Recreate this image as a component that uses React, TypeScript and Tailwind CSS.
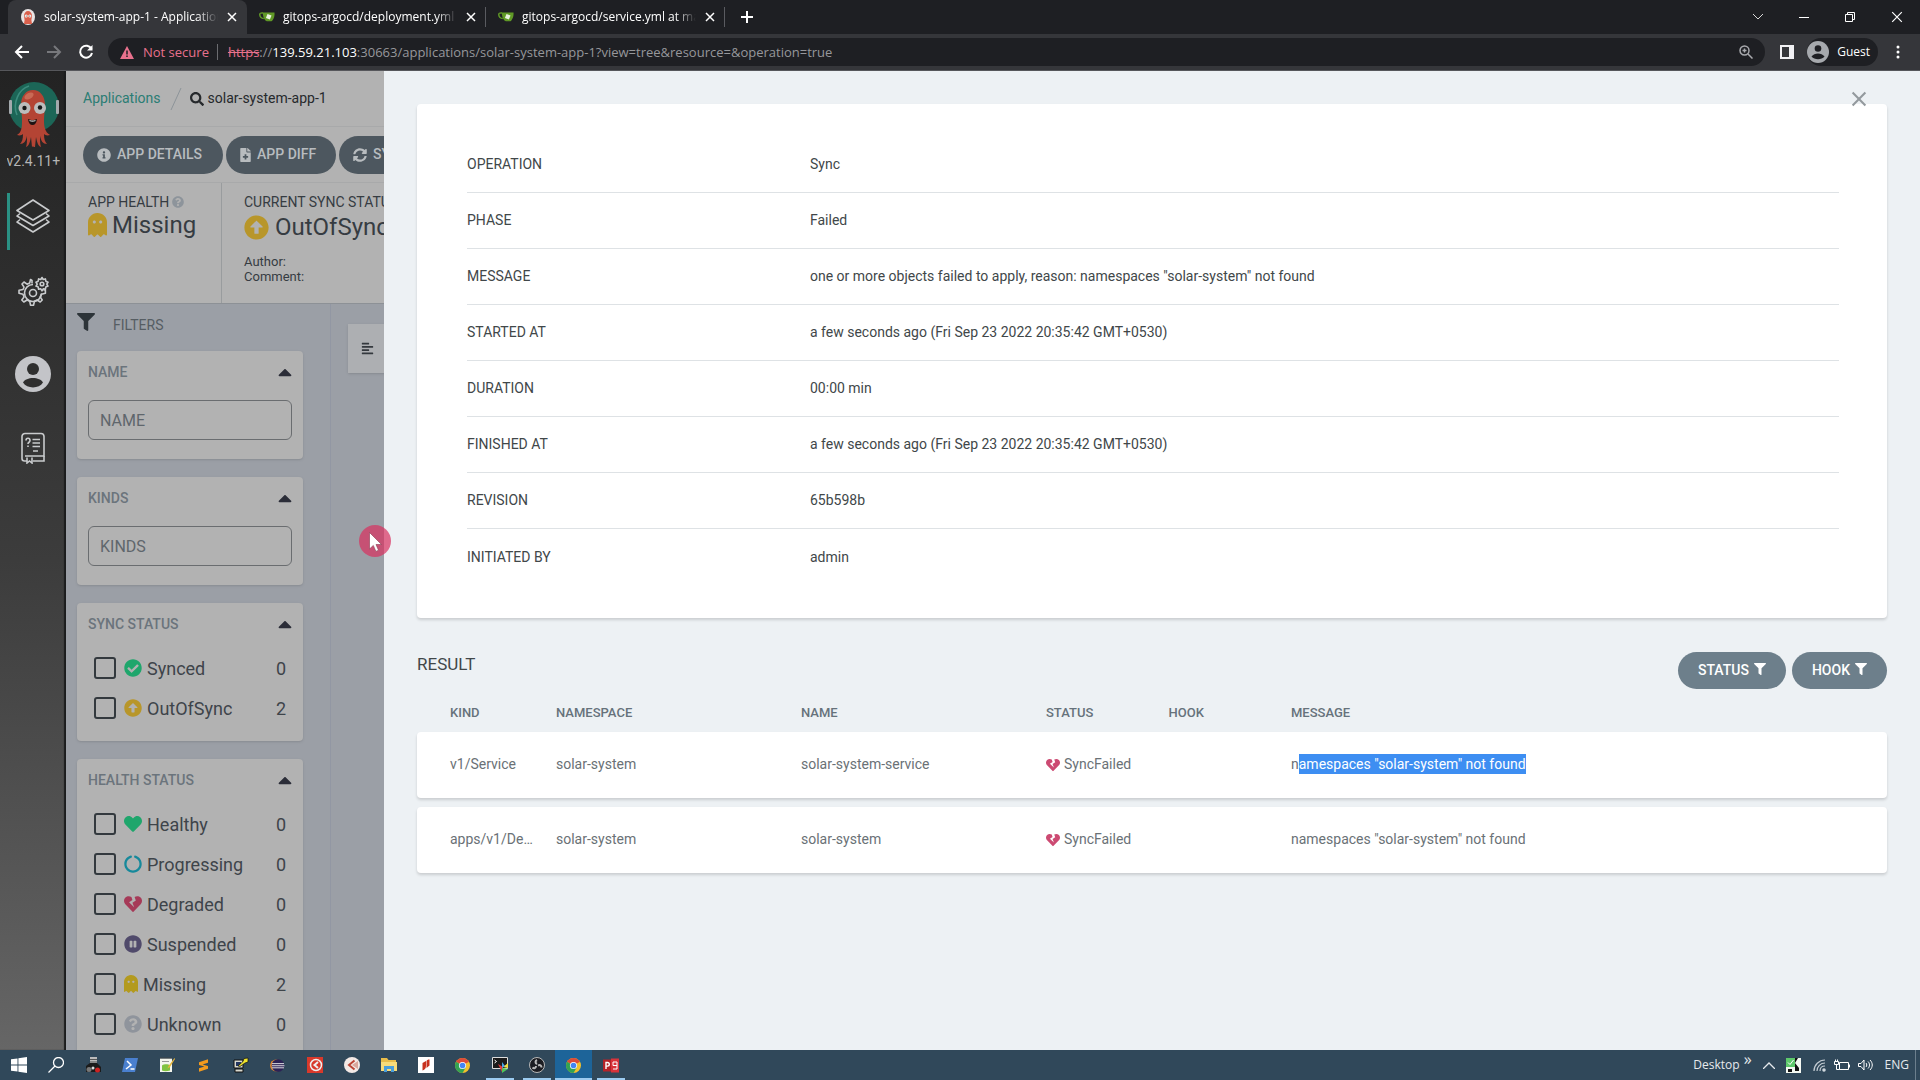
import { useState } from 'react';
import type { ReactNode } from 'react';
import {
  FaAlignLeft,
  FaArrowAltCircleUp,
  FaCaretUp,
  FaCheckCircle,
  FaCircleNotch,
  FaFileMedical,
  FaFilter,
  FaGhost,
  FaHeart,
  FaHeartBroken,
  FaInfoCircle,
  FaPauseCircle,
  FaQuestionCircle,
  FaSearch,
  FaSyncAlt,
} from 'react-icons/fa';

const browserTabs = [
  { title: 'solar-system-app-1 - Applications', icon: 'argo', active: true },
  { title: 'gitops-argocd/deployment.yml at main', icon: 'gitea', active: false },
  { title: 'gitops-argocd/service.yml at main', icon: 'gitea', active: false },
];

const operation = [
  { label: 'OPERATION', value: 'Sync' },
  { label: 'PHASE', value: 'Failed' },
  { label: 'MESSAGE', value: 'one or more objects failed to apply, reason: namespaces "solar-system" not found' },
  { label: 'STARTED AT', value: 'a few seconds ago (Fri Sep 23 2022 20:35:42 GMT+0530)' },
  { label: 'DURATION', value: '00:00 min' },
  { label: 'FINISHED AT', value: 'a few seconds ago (Fri Sep 23 2022 20:35:42 GMT+0530)' },
  { label: 'REVISION', value: '65b598b' },
  { label: 'INITIATED BY', value: 'admin' },
];

const results = [
  { kind: 'v1/Service', namespace: 'solar-system', name: 'solar-system-service', selected: true },
  { kind: 'apps/v1/Deployment', namespace: 'solar-system', name: 'solar-system', selected: false },
];

const syncStatuses = [
  { name: 'Synced', count: 0, icon: <FaCheckCircle className="text-[#1fa66c]" /> },
  { name: 'OutOfSync', count: 2, icon: <FaArrowAltCircleUp className="text-[#b8962a]" /> },
];

const healthStatuses = [
  { name: 'Healthy', count: 0, icon: <FaHeart className="text-[#1fa66c]" /> },
  { name: 'Progressing', count: 0, icon: <FaCircleNotch className="text-[#16899b]" /> },
  { name: 'Degraded', count: 0, icon: <FaHeartBroken className="text-[#a63a58]" /> },
  { name: 'Suspended', count: 0, icon: <FaPauseCircle className="text-[#504a6b]" /> },
  { name: 'Missing', count: 2, icon: <GhostIcon className="h-[18px] w-[14px] text-[#b39a1f]" /> },
  { name: 'Unknown', count: 0, icon: <FaQuestionCircle className="text-[#8f949c]" /> },
];

function GhostIcon({ className }: { className: string }) {
  return <FaGhost className={className} preserveAspectRatio="none" />;
}

function CloseIcon({ className }: { className: string }) {
  return (
    <svg viewBox="0 0 10 10" className={className} fill="none" stroke="currentColor">
      <path d="M1 1l8 8M9 1l-8 8" />
    </svg>
  );
}

function ArgoFavicon() {
  return (
    <svg viewBox="0 0 16 16" className="size-4 shrink-0">
      <ellipse cx="8" cy="8" rx="7" ry="8" fill="#e8e4e4" />
      <path d="M4 7a4 5 0 018 0l-.6 4 .6 4H4l.6-4z" fill="#d9604c" />
      <circle cx="6.2" cy="7" r="1.5" fill="#fff" />
      <circle cx="9.8" cy="7" r="1.5" fill="#fff" />
      <circle cx="6.2" cy="7" r=".6" fill="#333" />
      <circle cx="9.8" cy="7" r=".6" fill="#333" />
    </svg>
  );
}

function GiteaFavicon() {
  return (
    <svg viewBox="0 0 16 16" className="size-4 shrink-0">
      <path d="M4 4C1.5 3.6.6 4.4.8 6c.3 2.2 1.8 3.4 4 3.6" fill="none" stroke="#609926" strokeWidth="1.5" />
      <path d="M3.8 3.5h11.7c.3 3-.4 6-2.3 8.2-.5.5-1 .6-1.6.6H7.8c-2.2-.8-4-4.4-4-8.8z" fill="#609926" />
      <path d="M8.5 5l4 1.5-1.6 4-4-1.6z" fill="#e9f3df" />
    </svg>
  );
}

function ArgoLogo() {
  return (
    <svg viewBox="0 0 54 68" className="h-[68px] w-[54px]">
      <circle cx="28" cy="26" r="25" fill="#1c6657" />
      <path d="M11 34C6 22 13 8 23 5" fill="none" stroke="#3c8c7d" strokeWidth="1.6" />
      <rect x="3" y="19" width="3" height="14" rx="1" fill="#a3a9ad" />
      <rect x="50" y="19" width="3" height="14" rx="1" fill="#a3a9ad" />
      <path
        d="M15 24c0-9 5-15 12-15s12 6 12 15c0 6-1 9-1 15 0 7 1 12 6 15-3 1-5 0-6-1 0 5 1 8 3 10-4 0-6-3-7-8 0 5 0 8 1 11-3-1-4-5-5-10l-1 10c-2 0-2-1-3 0l-1-10c-1 5-2 9-5 10 1-3 1-6 1-11-1 5-3 8-7 8 2-2 3-5 3-10-1 1-3 2-6 1 5-3 5-8 5-15 0-6-1-9-1-15z"
        fill="#b44434"
      />
      <ellipse cx="23" cy="15" rx="5" ry="3" fill="#c96a55" transform="rotate(-30 23 15)" />
      <circle cx="18.5" cy="27" r="6" fill="#bcbcbc" />
      <circle cx="34" cy="27" r="6" fill="#bcbcbc" />
      <circle cx="18.5" cy="27" r="2.2" fill="#161616" />
      <circle cx="34" cy="26.5" r="2.2" fill="#161616" />
      <path d="M22 38c3 1.5 6 1.5 9 0-.5 4-2 6-4.5 6S22.500 42 22 38z" fill="#1c1313" />
      <path d="M23.5 39.5c2 .8 4 .8 6 0" stroke="#ccc" strokeWidth="1.2" fill="none" />
    </svg>
  );
}

function BrowserChrome() {
  return (
    <header className="shrink-0 bg-[#1e1f23] font-['Open_Sans','Noto_Sans',sans-serif] text-white">
      <div className="flex h-[34px] items-stretch justify-between pl-2">
        <div className="flex items-stretch">
          {browserTabs.map((tab) => (
            <div
              key={tab.title}
              className={`flex w-[239px] items-center rounded-t-lg pr-[10px] pl-3 ${tab.active ? 'bg-[#35363a]' : ''}`}
            >
              {tab.icon === 'argo' ? <ArgoFavicon /> : <GiteaFavicon />}
              <span className="ml-2 w-[174px] overflow-hidden text-xs leading-5 whitespace-nowrap [mask-image:linear-gradient(to_right,black_88%,transparent)]">
                {tab.title}
              </span>
              <button aria-label="Close tab" className="ml-auto">
                <CloseIcon className="size-[10px] stroke-[1.5]" />
              </button>
              {!tab.active && <span className="ml-[9px] -mr-[10px] h-5 w-px bg-[#5a5b60]" />}
            </div>
          ))}
          <button aria-label="New tab" className="ml-4">
            <svg viewBox="0 0 12 12" className="size-3" stroke="#fff" strokeWidth="2">
              <path d="M6 0v12M0 6h12" />
            </svg>
          </button>
        </div>
        <div className="flex items-center gap-9 pr-[17px]">
          <button aria-label="Search tabs">
            <svg viewBox="0 0 10 6" className="h-[6px] w-[10px]" fill="none" stroke="#d8d8d8">
              <path d="M0 0l5 5 5-5" />
            </svg>
          </button>
          <button aria-label="Minimize">
            <span className="block h-px w-[10px] bg-white" />
          </button>
          <button aria-label="Restore">
            <svg viewBox="0 0 10 10" className="size-[10px]" fill="none" stroke="#fff">
              <path d="M.5 2.5h7v7h-7zM2.5 2.5v-2h7v7h-2" />
            </svg>
          </button>
          <button aria-label="Close window">
            <CloseIcon className="size-3" />
          </button>
        </div>
      </div>

      <div className="flex h-[37px] items-center border-b border-[#56575b] bg-[#35363a] pr-5 pl-[14px]">
        <div className="flex items-center gap-4">
          <button aria-label="Back">
            <svg viewBox="0 0 16 16" className="size-4" fill="none" stroke="#fff" strokeWidth="2">
              <path d="M15 8H2M8 2L2 8l6 6" />
            </svg>
          </button>
          <button aria-label="Forward">
            <svg viewBox="0 0 16 16" className="size-4" fill="none" stroke="#77787c" strokeWidth="2">
              <path d="M1 8h13M8 2l6 6-6 6" />
            </svg>
          </button>
          <button aria-label="Reload">
            <svg viewBox="0 0 16 16" className="size-4" fill="none" stroke="#fff" strokeWidth="2">
              <path d="M13.5 5A6 6 0 1014 9" />
              <path d="M14.5 1v5.5H9z" fill="#fff" stroke="none" />
            </svg>
          </button>
        </div>
        <div className="ml-[14px] flex h-7 flex-1 items-center rounded-full bg-[#1e1f23] px-3 text-[13px] leading-5">
          <svg viewBox="0 0 14 13" className="h-[13px] w-[14px]">
            <path d="M7 0l7 13H0z" fill="#e8718d" />
            <path d="M7 4.500v4M7 9.500v1.500" stroke="#1e1f23" strokeWidth="1.5" />
          </svg>
          <span className="ml-[9px] text-[#e8718d]">Not secure</span>
          <span className="mr-[10px] ml-2 h-4 w-px bg-[#6b6c70]" />
          <span className="flex-1 whitespace-nowrap text-[#96979b]">
            <span className="text-[#e8718d] line-through">https</span>://
            <span className="text-white">139.59.21.103</span>
            :30663/applications/solar-system-app-1?view=tree&amp;resource=&amp;operation=true
          </span>
          <svg viewBox="0 0 14 14" className="size-[14px]" fill="none" stroke="#a9aaae" strokeWidth="1.5">
            <circle cx="5.500" cy="5.500" r="4.500" />
            <path d="M9 9l4.500 4.500M5.500 3.500v4M3.500 5.500h4" />
          </svg>
        </div>
        <button aria-label="Side panel" className="ml-[15px]">
          <svg viewBox="0 0 14 14" className="size-[14px]">
            <path d="M0 0h14v14H0z" fill="#f1f1f4" />
            <path d="M2 2h7v10H2z" fill="#35363a" />
          </svg>
        </button>
        <button className="ml-[13px] flex h-7 items-center gap-2 rounded-full bg-[#1e1f23] pr-2 text-xs">
          <svg viewBox="0 0 22 22" className="size-[22px]">
            <circle cx="11" cy="11" r="11" fill="#a6a9ad" />
            <circle cx="11" cy="7.500" r="3.300" fill="#1e1f23" />
            <path d="M4.500 15.500c3-4 10-4 13 0-3 3.500-10 3.500-13 0z" fill="#1e1f23" />
          </svg>
          Guest
        </button>
        <button aria-label="Menu" className="ml-[18px]">
          <svg viewBox="0 0 4 14" className="h-[14px] w-1" fill="#fff">
            <circle cx="2" cy="2" r="1.5" />
            <circle cx="2" cy="7" r="1.5" />
            <circle cx="2" cy="12" r="1.5" />
          </svg>
        </button>
      </div>
    </header>
  );
}

function Sidebar() {
  return (
    <nav className="flex w-[66px] shrink-0 flex-col items-center bg-linear-to-b from-[#232323] via-[#3c3c3c] to-[#666] pt-[10px] text-[#c9cbcd] shadow-[inset_-2px_0_1px_#1b1c1d]">
      <ArgoLogo />
      <div className="mb-5 w-[53px] overflow-hidden text-[14px] leading-6 whitespace-nowrap text-[#b5b5b5]">v2.4.11+b7d7f5a</div>
      <div className="flex h-[57px] w-full items-center pl-[7px]">
        <span className="h-[57px] w-[3px] bg-[#2a9184]" />
        <a href="#applications" aria-label="Applications" className="-mt-3 ml-[6px]">
          <svg viewBox="0 0 34 34" className="size-[34px]" fill="none" stroke="currentColor" strokeWidth="1.6" strokeLinejoin="round">
            <path d="M17 1L1 11.500 17 21l16-9.500z" />
            <path d="M4 14.500L1 17l16 9.500L33 17l-3-2.500" />
            <path d="M4 20.500L1 23l16 10 16-10-3-2.500" />
          </svg>
        </a>
      </div>
      <a href="#settings" aria-label="Settings" className="mt-[26px]">
        <svg viewBox="0 0 32 32" className="size-8" fill="none" stroke="currentColor" strokeWidth="1.6" strokeLinejoin="round">
          <circle cx="16" cy="17" r="3.500" />
          <path d="M15 7.500v-3l-1.500-1-.8 3.500-2.700 1.200-3-2.200-2 2 2 3.200L6 13.500l-4 .8v3l4 1 1 2.700-2.200 3 2 2 3.200-2 2.700 1.200.8 4h3l1-4 2.500-1.200 3.200 2 2-2-2-3.200 1.200-2.500 4-1v-3l-2-.5" />
          <path d="M16 8.500a8.500 8.500 0 108.500 9" />
          <circle cx="25" cy="8" r="1.800" />
          <path d="M25 1.500l1.200 2 2.200-.6.400 2.300 2.200 1-1.200 1.900 1.200 2-2.200.9-.4 2.300-2.200-.5-1.200 2-1.200-2-2.200.5-.4-2.300-2.200-.9 1.200-2-1.200-1.900 2.200-1 .4-2.300 2.200.6z" />
        </svg>
      </a>
      <a href="#user" aria-label="User" className="mt-12">
        <svg viewBox="0 0 36 36" className="size-9">
          <circle cx="18" cy="18" r="18" fill="#c3c4c8" />
          <circle cx="18" cy="13" r="6" fill="#2f2f2f" />
          <path d="M8 26.500c3-6 17-6 20 0-4 6.500-16 6.500-20 0z" fill="#2f2f2f" />
        </svg>
      </a>
      <a href="#docs" aria-label="Documentation" className="mt-10">
        <svg viewBox="0 0 24 32" className="h-8 w-6" fill="none" stroke="currentColor" strokeWidth="1.6">
          <path d="M6 29H3.500A2.500 2.500 0 011 26.500v-22A3 3 0 014 1.500h16a3 3 0 013 3V24H4" />
          <path d="M23 24v5H12M6 25.500V31l2.500-2 2.500 2v-5.500" />
          <path d="M11.500 7.500H19M11.500 11H19M11.500 14.500H19M12 19h5" />
          <path d="M5 8.500c0-3 4-3 4 0 0 2-2 1.500-2 3.500M7 13.500v1.500" />
        </svg>
      </a>
    </nav>
  );
}

function FilterCard({ title, children }: { title: string; children: ReactNode }) {
  return (
    <section className="rounded-[4px] bg-[#b2b2b2] px-[11px] pb-[13px] shadow-sm">
      <button className="flex h-[42px] w-full items-center justify-between text-[14px] font-medium text-[#6b747c]">
        {title}
        <FaCaretUp className="-mr-1 size-[22px] text-[#2b2d38]" />
      </button>
      {children}
    </section>
  );
}

function TextFilter({ title }: { title: string }) {
  return (
    <FilterCard title={title}>
      <input
        aria-label={title}
        placeholder={title}
        className="mt-[7px] mb-[6px] block h-10 w-full rounded-[6px] border border-[#6a6d70] bg-transparent px-[11px] text-base placeholder:text-[#5f666c]"
      />
    </FilterCard>
  );
}

function CheckFilter({ title, items }: { title: string; items: { name: string; count: number; icon: ReactNode }[] }) {
  return (
    <FilterCard title={title}>
      <div className="pt-[3px]">
        {items.map((item) => (
          <label key={item.name} className="flex h-10 items-center px-[6px] text-[18px] text-[#3e444a]">
            <input type="checkbox" className="size-[22px] appearance-none rounded-[3px] border-2 border-[#33393e]" />
            <span className="ml-2 [&>svg]:block">{item.icon}</span>
            <span className="ml-[5px] flex-1">{item.name}</span>
            <span>{item.count}</span>
          </label>
        ))}
      </div>
    </FilterCard>
  );
}

function AppPage() {
  return (
    <div className="flex w-[318px] shrink-0 flex-col overflow-hidden bg-[#9b9fa6] whitespace-nowrap">
      <div className="flex h-[56px] shrink-0 items-center border-b border-[#a8a9aa] bg-[#b2b2b2] px-[17px] text-[14px]">
        <a href="#applications" className="text-[#2b7d74]">Applications</a>
        <svg viewBox="0 0 12 24" className="mr-2 ml-[9px] h-6 w-3" stroke="#8d9499">
          <path d="M11 1L1 23" />
        </svg>
        <FaSearch className="size-[14px] text-[#26292c]" />
        <span className="ml-1 text-[#26292c]">solar-system-app-1</span>
      </div>
      <div className="flex h-[56px] shrink-0 items-center gap-[3px] border-b border-[#a8a9aa] bg-[#b2b2b2] pl-[17px] text-[14px] font-medium text-[#b8bcbf]">
        <button className="flex h-[38px] w-[140px] shrink-0 items-center gap-[6px] rounded-full bg-[#4d575f] pl-[14px]">
          <FaInfoCircle className="size-[14px]" /> APP DETAILS
        </button>
        <button className="flex h-[38px] w-[110px] shrink-0 items-center gap-[6px] rounded-full bg-[#4d575f] pl-[14px]">
          <FaFileMedical className="h-[14px] w-[11px]" /> APP DIFF
        </button>
        <button className="flex h-[38px] shrink-0 items-center gap-[6px] rounded-full bg-[#4d575f] px-[14px]">
          <FaSyncAlt className="size-[14px]" /> SYNC
        </button>
      </div>
      <div className="flex h-[121px] shrink-0 items-stretch border-b border-[#8d9196] bg-[#b2b2b2] text-[#363c42]">
        <div className="w-[156px] shrink-0 border-r border-[#999c9e] pt-[9px] pl-[22px]">
          <div className="flex items-center gap-[3px] text-[14px] leading-5">
            APP HEALTH <FaQuestionCircle className="size-3 text-[#8d949b]" />
          </div>
          <div className="flex items-center gap-[5px] text-[24px] leading-[26px]">
            <GhostIcon className="h-[24px] w-[19px] text-[#b8962a]" /> Missing
          </div>
        </div>
        <div className="shrink-0 pt-[9px] pl-[22px]">
          <div className="text-[14px] leading-5">CURRENT SYNC STATUS</div>
          <div className="flex items-center gap-[6px] text-[24px] leading-[31px]">
            <FaArrowAltCircleUp className="size-[25px] text-[#b8962a]" /> OutOfSync
          </div>
          <div className="mt-[11px] text-[13px] leading-[15px]">
            <div>Author:</div>
            <div>Comment:</div>
          </div>
        </div>
      </div>
      <div className="flex min-h-0 flex-1">
        <aside className="flex w-[265px] shrink-0 flex-col gap-[18px] border-r border-[#9297a3] pr-[27px] pl-[11px]">
          <div className="-mb-[18px] flex h-[47px] shrink-0 items-start pt-[9px] text-[14px] text-[#565d63]">
            <FaFilter className="size-[18px] text-[#2d3439]" />
            <span className="ml-[18px] leading-6">FILTERS</span>
          </div>
          <TextFilter title="NAME" />
          <TextFilter title="KINDS" />
          <CheckFilter title="SYNC STATUS" items={syncStatuses} />
          <CheckFilter title="HEALTH STATUS" items={healthStatuses} />
        </aside>
        <div className="flex-1 pt-5 pl-[17px]">
          <button aria-label="Align" className="flex h-[49px] w-[60px] items-center bg-[#adafb2] pl-[13px] shadow">
            <FaAlignLeft className="size-[13px] text-[#34393e]" />
          </button>
        </div>
      </div>
    </div>
  );
}

function ResultTable() {
  return (
    <table className="w-full table-fixed border-separate border-spacing-x-0 border-spacing-y-[9px] text-left text-[14px] text-[#6a7176]">
      <thead>
        <tr className="text-[13px] text-[#66727b]">
          <th className="w-[139px] pl-[33px] font-medium">KIND</th>
          <th className="w-1/6 font-medium">NAMESPACE</th>
          <th className="w-1/6 font-medium">NAME</th>
          <th className="w-1/12 font-medium">STATUS</th>
          <th className="w-1/12 font-medium">HOOK</th>
          <th className="font-medium">MESSAGE</th>
        </tr>
      </thead>
      <tbody>
        {results.map((row) => (
          <tr key={row.kind} className="h-[66px] rounded-[4px] bg-white shadow-[0_2px_3px_rgba(0,0,0,0.15)]">
            <td className="truncate rounded-l-[4px] pr-5 pl-[33px]">{row.kind}</td>
            <td>{row.namespace}</td>
            <td>{row.name}</td>
            <td>
              <span className="flex items-center gap-1">
                <FaHeartBroken className="size-[14px] text-[#cc4a72]" /> SyncFailed
              </span>
            </td>
            <td />
            <td className="rounded-r-[4px]">
              {row.selected ? (
                <>
                  n<span className="bg-[#3d8ef2] py-[2px] text-white">amespaces "solar-system" not found</span>
                </>
              ) : (
                'namespaces "solar-system" not found'
              )}
            </td>
          </tr>
        ))}
      </tbody>
    </table>
  );
}

function OperationPanel({ onClose }: { onClose: () => void }) {
  return (
    <main className="relative min-w-0 flex-1 bg-[#edf1f4] px-[33px] pt-[33px] text-[#414749]">
      <button aria-label="Close" onClick={onClose} className="absolute top-5 right-[53px] text-[#93999d]">
        <CloseIcon className="size-4 stroke-[1.3]" />
      </button>
      <dl className="rounded-[4px] bg-white py-[33px] pr-12 pl-[50px] text-[14px] shadow-[0_2px_3px_rgba(0,0,0,0.15)]">
        {operation.map((item) => (
          <div key={item.label} className="flex h-14 items-center border-b border-[#dee2e5] last:border-0">
            <dt className="w-1/4">{item.label}</dt>
            <dd>{item.value}</dd>
          </div>
        ))}
      </dl>
      <div className="mt-[34px] mb-[5px] flex items-start justify-between">
        <h2 className="text-[17px] leading-6">RESULT</h2>
        <div className="flex gap-[6px] text-[14px] font-medium text-white">
          <button className="flex h-[37px] items-center gap-[5px] rounded-full bg-[#6d7f8b] px-5">
            STATUS <FaFilter className="mb-1 size-3" />
          </button>
          <button className="flex h-[37px] items-center gap-[5px] rounded-full bg-[#6d7f8b] px-5">
            HOOK <FaFilter className="mb-1 size-3" />
          </button>
        </div>
      </div>
      <ResultTable />
      {/* pointer with the click highlight */}
      <svg viewBox="0 0 32 32" className="absolute top-[454px] -left-[25px] size-8">
        <circle cx="16" cy="16" r="16" fill="#d9315f" fillOpacity=".7" />
        <path d="M10.500 7.500v16.500l3.800-3.600 2.600 6 2.600-1.200-2.500-5.700h5.500z" fill="#fff" stroke="#8c3a52" strokeWidth=".6" />
      </svg>
    </main>
  );
}

function ChromeIcon() {
  return (
    <svg viewBox="0 0 16 16" className="size-[15px]">
      <circle cx="8" cy="8" r="8" fill="#f2c02c" />
      <path d="M8 8L1.100 4A8 8 0 0114.900 4z" fill="#dd4b39" />
      <path d="M8 8L1.100 4A8 8 0 008 16l3.500-6z" fill="#33a353" />
      <circle cx="8" cy="8" r="3.800" fill="#fff" />
      <circle cx="8" cy="8" r="3" fill="#4285f4" />
    </svg>
  );
}

const taskbarItems: { name: string; state?: 'open' | 'active'; icon: ReactNode }[] = [
  {
    name: 'Start',
    icon: (
      <svg viewBox="0 0 16 16" className="size-4" fill="#fff">
        <path d="M0 2.300L6.500 1.400v6.100H0zM7.400 1.300L16 0v7.500H7.400zM0 8.400h6.500v6.200L0 13.700zM7.400 8.400H16V16l-8.600-1.200z" />
      </svg>
    ),
  },
  {
    name: 'Search',
    icon: (
      <svg viewBox="0 0 16 16" className="size-4" fill="none" stroke="#fff" strokeWidth="1.3">
        <circle cx="10.500" cy="5.500" r="5" />
        <path d="M7 9l-6.500 6.500" />
      </svg>
    ),
  },
  {
    name: 'Database',
    icon: (
      <svg viewBox="0 0 16 16" className="size-4">
        <path d="M5 0h7v7H5z" fill="#bbb" />
        <path d="M5 2.500h7M5 5h7" stroke="#555" />
        <path d="M1 9l4-3h7l4 4v5H1z" fill="#1b1b1b" />
        <circle cx="4" cy="12.500" r="2.500" fill="#777" />
        <circle cx="12.500" cy="13" r="2.500" fill="#c22" />
        <circle cx="8" cy="11" r="1.5" fill="#ddd" />
      </svg>
    ),
  },
  {
    name: 'PowerShell',
    icon: (
      <svg viewBox="0 0 16 14" className="h-[14px] w-4">
        <path d="M3 0h13l-3 14H0z" fill="#4a80cf" />
        <path d="M5 3l4 4-5 4M8.500 11h4" stroke="#fff" strokeWidth="1.5" fill="none" />
      </svg>
    ),
  },
  {
    name: 'Notepad++',
    icon: (
      <svg viewBox="0 0 16 16" className="size-4">
        <path d="M1 1.500h12V15H1z" fill="#f4f6ee" />
        <path d="M3 8.500c3-2 7-1 8 0v5c-3 1-6 1-8 0z" fill="#80c342" />
        <path d="M1.500 1h11" stroke="#444" strokeWidth="1.5" strokeDasharray="1 1" />
        <path d="M3 4.500h7" stroke="#999" />
        <path d="M15.500 1l-6 8-1 2.500 2.500-1.500 5-8z" fill="#e5b53b" />
      </svg>
    ),
  },
  {
    name: 'Sublime Text',
    icon: (
      <svg viewBox="0 0 10 14" className="h-[13px] w-[9px]" fill="#f39a1d">
        <path d="M0 3.500L10 0v4L4 6l6 1.500v3L0 14v-4l6-2-6-1.500z" />
      </svg>
    ),
  },
  {
    name: 'PuTTY',
    icon: (
      <svg viewBox="0 0 16 16" className="size-4">
        <path d="M1 3h9v8H1zM2 12h8v3H2z" fill="#d9d9cf" stroke="#111" />
        <path d="M3 5h5v4H3z" fill="#23355f" />
        <path d="M15 1l-4 .5-1 3L5 9l2 .5L12 6l3-1z" fill="#f0e52d" stroke="#111" strokeWidth=".7" />
      </svg>
    ),
  },
  {
    name: 'Eclipse',
    icon: (
      <svg viewBox="0 0 16 14" className="h-[13px] w-[15px]">
        <circle cx="6.500" cy="7" r="6.500" fill="#e08733" />
        <circle cx="8.500" cy="7" r="6.800" fill="#2c2255" />
        <path d="M2 5h13M2 7.300h13.500M2 9.500h13" stroke="#eee" />
      </svg>
    ),
  },
  {
    name: 'Camtasia Recorder',
    icon: (
      <svg viewBox="0 0 16 16" className="size-4">
        <path d="M0 0h16v16H0z" fill="#d8392b" />
        <circle cx="9" cy="8" r="5.500" fill="none" stroke="#eee" strokeWidth="1.5" />
        <path d="M11 5L7.500 8l3.500 3" fill="none" stroke="#eee" strokeWidth="2" />
      </svg>
    ),
  },
  {
    name: 'Camtasia',
    icon: (
      <svg viewBox="0 0 16 16" className="size-4">
        <circle cx="8" cy="8" r="8" fill="#f3e9e6" />
        <path d="M10.500 3.500L5 8l5.500 4.500" fill="none" stroke="#bb4435" strokeWidth="2" />
        <path d="M8 8l6-4v8z" fill="#d9a79d" />
      </svg>
    ),
  },
  {
    name: 'File Explorer',
    icon: (
      <svg viewBox="0 0 16 14" className="h-[14px] w-4">
        <path d="M0 0h6l1.500 2H15v11H0z" fill="#e9bd4a" />
        <path d="M0 4h16v9H0z" fill="#f8dc7a" />
        <path d="M3 8h10v6h-3v-3H6v3H3z" fill="#4a9fdb" />
      </svg>
    ),
  },
  {
    name: 'Nitro',
    icon: (
      <svg viewBox="0 0 16 16" className="size-4">
        <path d="M0 0h16v16H0z" fill="#fff" />
        <path d="M4.500 6l3.500-2v5c0 2-1 3.500-3.500 4.500zM8.500 4.500C8.500 3 10 2.500 11.500 2.500v6L8.500 11z" fill="#c8321f" />
      </svg>
    ),
  },
  { name: 'Google Chrome', icon: <ChromeIcon /> },
  {
    name: 'MobaXterm',
    state: 'open',
    icon: (
      <svg viewBox="0 0 16 16" className="size-4">
        <path d="M.5.500h15v11H.5z" fill="#1b1b1b" stroke="#ddd" />
        <path d="M2.500 3l2 1.500-2 1.500" stroke="#fff" fill="none" />
        <path d="M6 7l5 3-1 5z" fill="#e23b3b" />
        <path d="M11 10l5-4v5z" fill="#f1dd3f" />
        <path d="M10 11l6 1-6 4z" fill="#4fc35a" />
        <path d="M10 5l3 4-3 2z" fill="#4aa3e8" />
      </svg>
    ),
  },
  {
    name: 'OBS Studio',
    state: 'open',
    icon: (
      <svg viewBox="0 0 16 16" className="size-4">
        <circle cx="8" cy="8" r="7.500" fill="#1c1d22" stroke="#b9b9b9" />
        <path d="M8 7c-2-1-2-3 0-4M9 8.500c2-1 3.500 0 3.500 2M7 9c0 2-2 3-3.500 1.500" stroke="#b9b9b9" strokeWidth="2" fill="none" />
      </svg>
    ),
  },
  { name: 'Chrome window', state: 'active', icon: <ChromeIcon /> },
  {
    name: 'PowerPoint',
    state: 'open',
    icon: (
      <svg viewBox="0 0 16 15" className="h-[15px] w-4">
        <path d="M0 1.500h9v12H0z" fill="#b52228" />
        <path d="M8 .500h8v14H8z" fill="#d8333a" />
        <path d="M3 11V4.500h1.500a1.800 1.800 0 010 3.600H3" stroke="#fff" strokeWidth="1.4" fill="none" />
        <path d="M10 4h4v7h-4M10 7.500h4M10 4v3.500" stroke="#fff" fill="none" />
      </svg>
    ),
  },
];

function Taskbar() {
  return (
    <footer className="flex h-[30px] shrink-0 items-stretch justify-between bg-[#30485a] font-['Open_Sans','Noto_Sans',sans-serif] text-xs text-[#e6eaed]">
      <div className="flex">
        {taskbarItems.map((item) => (
          <button
            key={item.name}
            aria-label={item.name}
            className={`flex w-[37px] flex-col items-center ${item.state === 'active' ? 'bg-[#1d6499]' : ''}`}
          >
            <span className="flex flex-1 items-center">{item.icon}</span>
            {item.state && <span className={`-mt-[2px] h-[2px] bg-[#9ccbf0] ${item.state === 'active' ? 'w-full' : 'w-7'}`} />}
          </button>
        ))}
      </div>
      <div className="flex items-center pr-1">
        <span>Desktop</span>
        <span className="mb-3 ml-1 text-base leading-none">»</span>
        <svg viewBox="0 0 12 7" className="ml-[11px] h-[7px] w-3" fill="none" stroke="#e6eaed" strokeWidth="1.3">
          <path d="M0 7l6-6 6 6" />
        </svg>
        <svg viewBox="0 0 15 15" className="ml-[11px] size-[15px]">
          <path d="M0 0h15v15H0z" fill="#f4f8f2" />
          <path d="M9 0h3l-3 5 4 5v3H9V9L6 7zM2 11h4v3H2z" fill="#111" />
          <path d="M0 0h9v9H0z" fill="#5dc86b" />
          <path d="M2 4.500L4 6.500 7.500 2" stroke="#fff" fill="none" />
        </svg>
        <svg viewBox="0 0 13 13" className="ml-3 size-[13px]" fill="none" stroke="#c3ccd3" strokeWidth="1.2">
          <path d="M1 12C1 6 6 1 12 1M4 12c0-4.500 3.500-8 8-8M7 12c0-3 2-5 5-5" />
          <circle cx="11" cy="11" r="1.2" fill="#fff" />
        </svg>
        <svg viewBox="0 0 16 12" className="ml-2 h-3 w-4" fill="none" stroke="#fff">
          <path d="M5.500 3.500h9v7h-9zM15.500 5.500v3M.5 2.500h4v3h-4zM1.500.500v2M3.500.500v2M2.500 5.500v5h3" />
        </svg>
        <svg viewBox="0 0 15 12" className="ml-2 h-3 w-[15px]" fill="none" stroke="#fff">
          <path d="M.5 4.500H3L6 1v10L3 7.500H.5zM8 4c1 1 1 3 0 4M10 2.500c2 2 2 5 0 7M12 1c3 3 3 7 0 10" />
        </svg>
        <span className="ml-3">ENG</span>
        <span className="ml-[6px] h-full w-px bg-[#6c7f8d]" />
      </div>
    </footer>
  );
}

export default function App() {
  const [panelOpen, setPanelOpen] = useState(true);

  return (
    <div className="flex h-screen flex-col overflow-hidden font-['Roboto',sans-serif]">
      <BrowserChrome />
      <div className="flex min-h-0 flex-1 bg-[#9b9fa6]">
        <Sidebar />
        <AppPage />
        {panelOpen && <OperationPanel onClose={() => setPanelOpen(false)} />}
      </div>
      <Taskbar />
    </div>
  );
}
